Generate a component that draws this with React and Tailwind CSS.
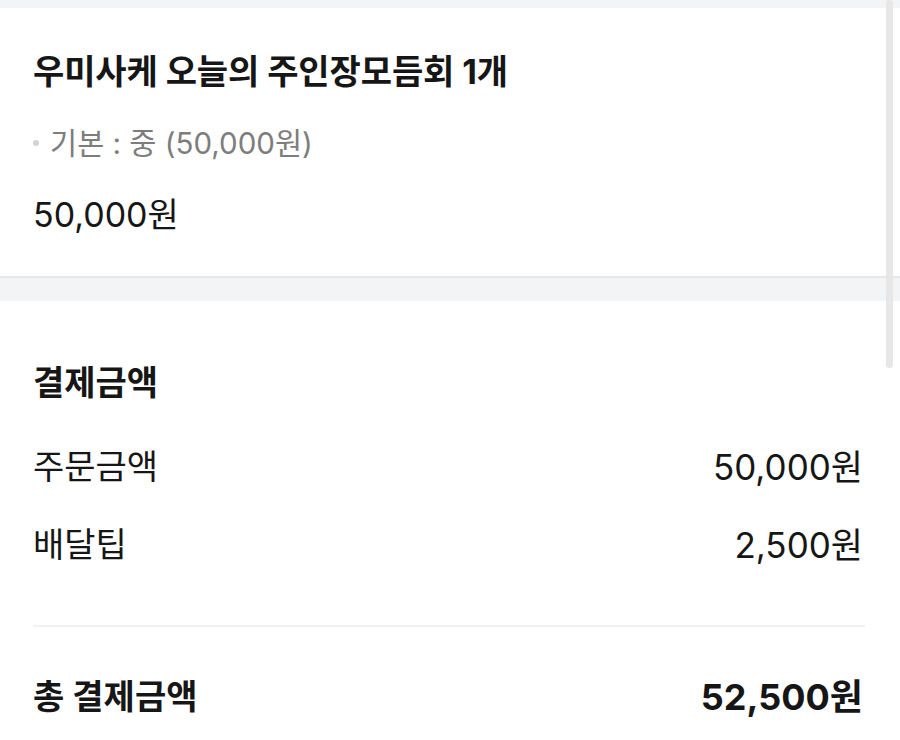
export default function App() {
    return (
        <div className="relative w-[900px] h-[740px] overflow-hidden bg-white text-[#161616] font-['Inter','Noto_Sans_CJK_KR',sans-serif]">
            <div className="h-[8px] bg-[#f3f4f6]" />

            {/* Order item */}
            <section className="pl-[33px] pr-[35px] pt-[40px] pb-[39px] border-b-2 border-[#e7e8ea]">
                <h2 className="text-[34px] font-bold leading-[48px] tracking-[-0.1px]">우미사케 오늘의 주인장모듬회 1개</h2>
                <div className="mt-[27px] flex items-center gap-[11px] text-[29.5px] leading-[40px] text-[#7d7d7d]">
                    <span className="w-[6px] h-[6px] rounded-full bg-[#d2d2d2]" />
                    <span>기본 : 중 (50,000원)</span>
                </div>
                <p className="mt-[30px] text-[34px] leading-[44px]">50,000원</p>
            </section>
            <div className="h-[23px] bg-[#f3f4f6]" />

            {/* Payment */}
            <section className="pl-[33px] pr-[37px] pt-[60px]">
                <h3 className="text-[34px] font-bold leading-[44px]">결제금액</h3>
                <div className="mt-[40px] flex items-center justify-between text-[34px] leading-[44px]">
                    <span>주문금액</span>
                    <span className="text-[35px]">50,000원</span>
                </div>
                <div className="mt-[34px] flex items-center justify-between text-[34px] leading-[44px]">
                    <span>배달팁</span>
                    <span className="text-[35px]">2,500원</span>
                </div>
                <div className="mt-[58px] -mr-[2px] h-[2px] bg-[#f1f1f1]" />
                <div className="mt-[47px] flex items-center justify-between text-[34px] font-bold leading-[46px]">
                    <span>총 결제금액</span>
                    <span className="text-[36px]">52,500원</span>
                </div>
            </section>

            {/* scrollbar */}
            <div className="absolute right-[7px] top-0 w-[7px] h-[368px] rounded-full bg-[#e7e7e7]" />
        </div>
    )
}
